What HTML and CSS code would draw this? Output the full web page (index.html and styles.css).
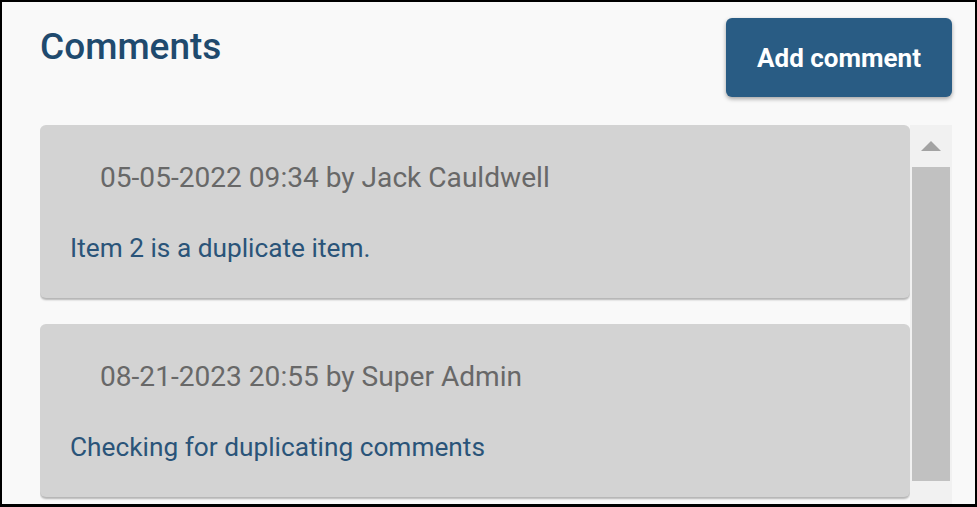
FILE: index.html
```html
<!DOCTYPE html>
<html lang="en">
<head>
<meta charset="utf-8">
<title>Comments</title>
<link rel="stylesheet" href="styles.css">
</head>
<body>
<div class="frame">
  <div class="header">
    <h1 class="title">Comments</h1>
    <button class="add-btn" type="button">Add comment</button>
  </div>
  <div class="list-area">
    <div class="list">
      <div class="card">
        <div class="meta">05-05-2022 09:34 by Jack Cauldwell</div>
        <div class="body">Item 2 is a duplicate item.</div>
      </div>
      <div class="card">
        <div class="meta">08-21-2023 20:55 by Super Admin</div>
        <div class="body">Checking for duplicating comments</div>
      </div>
    </div>
    <div class="scrollbar">
      <div class="sb-up"><span class="sb-arrow"></span></div>
      <div class="sb-thumb"></div>
    </div>
  </div>
</div>
</body>
</html>
```

FILE: styles.css
```css
html, body {
  margin: 0;
  padding: 0;
}
body {
  font-family: Roboto, "Liberation Sans", sans-serif;
  background: #ffffff;
}
.frame {
  box-sizing: border-box;
  width: 977px;
  height: 507px;
  border: 2px solid #000;
  border-bottom-width: 3px;
  background: #f9f9f9;
  display: flex;
  flex-direction: column;
  overflow: hidden;
}
.header {
  display: flex;
  justify-content: space-between;
  align-items: flex-start;
  padding: 16px 23px 0 38px;
}
.title {
  margin: 7px 0 0 0;
  font-size: 37px;
  line-height: 43px;
  font-weight: 500;
  color: #1f4a6e;
}
.add-btn {
  width: 226px;
  height: 79px;
  border: none;
  border-radius: 6px;
  background: #295c84;
  color: #ffffff;
  font-family: Roboto, "Liberation Sans", sans-serif;
  font-size: 26px;
  font-weight: 700;
  box-shadow: 0 2px 4px rgba(0, 0, 0, 0.35);
  padding: 0;
}
.list-area {
  display: flex;
  margin: 28px 23px 0 38px;
  flex: 1;
  min-height: 0;
  overflow: hidden;
}
.list {
  width: 870px;
  display: flex;
  flex-direction: column;
  gap: 26px;
}
.card {
  background: #d3d3d3;
  border-radius: 6px;
  box-shadow: 0 2px 2px rgba(0, 0, 0, 0.28);
  padding: 36px 30px 35px 30px;
  flex-shrink: 0;
}
.meta {
  padding-left: 30px;
  font-size: 28.1px;
  line-height: 33px;
  color: #686868;
}
.body {
  margin-top: 39px;
  font-size: 26.25px;
  line-height: 30px;
  color: #2a5479;
}
.scrollbar {
  width: 42px;
  background: #f1f1f1;
  display: flex;
  flex-direction: column;
  align-items: center;
}
.sb-up {
  height: 42px;
  width: 42px;
  display: flex;
  align-items: center;
  justify-content: center;
}
.sb-arrow {
  width: 0;
  height: 0;
  border-left: 10px solid transparent;
  border-right: 10px solid transparent;
  border-bottom: 10px solid #a3a3a3;
}
.sb-thumb {
  width: 38px;
  height: 314px;
  background: #c1c1c1;
}
```
